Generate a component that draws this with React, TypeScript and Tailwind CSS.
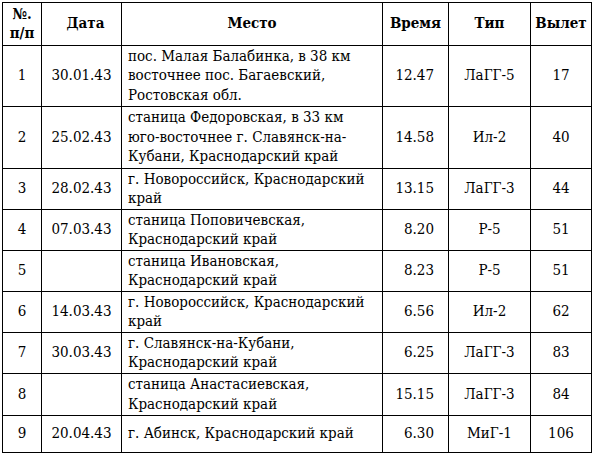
const rows = [
  { n: '1', date: '30.01.43', place: ['пос. Малая Балабинка, в 38 км', 'восточнее пос. Багаевский,', 'Ростовская обл.'], time: '12.47', type: 'ЛаГГ-5', sortie: '17' },
  { n: '2', date: '25.02.43', place: ['станица Федоровская, в 33 км', 'юго-восточнее г. Славянск-на-', 'Кубани, Краснодарский край'], time: '14.58', type: 'Ил-2', sortie: '40' },
  { n: '3', date: '28.02.43', place: ['г. Новороссийск, Краснодарский', 'край'], time: '13.15', type: 'ЛаГГ-3', sortie: '44' },
  { n: '4', date: '07.03.43', place: ['станица Поповичевская,', 'Краснодарский край'], time: '8.20', type: 'Р-5', sortie: '51' },
  { n: '5', date: '', place: ['станица Ивановская,', 'Краснодарский край'], time: '8.23', type: 'Р-5', sortie: '51' },
  { n: '6', date: '14.03.43', place: ['г. Новороссийск, Краснодарский', 'край'], time: '6.56', type: 'Ил-2', sortie: '62' },
  { n: '7', date: '30.03.43', place: ['г. Славянск-на-Кубани,', 'Краснодарский край'], time: '6.25', type: 'ЛаГГ-3', sortie: '83' },
  { n: '8', date: '', place: ['станица Анастасиевская,', 'Краснодарский край'], time: '15.15', type: 'ЛаГГ-3', sortie: '84' },
  { n: '9', date: '20.04.43', place: ['г. Абинск, Краснодарский край'], time: '6.30', type: 'МиГ-1', sortie: '106' },
];

// DejaVu Serif carries Cyrillic; semi-condensed at 15px gets close to Times widths
const cell = "bg-white flex items-center [font-family:'DejaVu_Serif',serif] [font-stretch:semi-condensed] text-[15px] leading-[19.5px]";

export default function App() {
  return (
    <div className="min-h-[455px] w-[594px] bg-white pl-[2px] pt-[2px] text-black">
      <div className="grid w-[590px] grid-cols-[38px_79px_260px_65px_81px_60px] grid-rows-[42px_60px_61px_40px_40px_40px_40px_40px_41px_36px] gap-px border border-black bg-black">
        {/* header */}
        <div className={`${cell} justify-center text-center font-bold`}>
          <span>№.<br />п/п</span>
        </div>
        <div className={`${cell} justify-center pl-2 font-bold`}>Дата</div>
        <div className={`${cell} justify-center font-bold`}>Место</div>
        <div className={`${cell} justify-center font-bold`}>Время</div>
        <div className={`${cell} justify-center font-bold`}>Тип</div>
        <div className={`${cell} justify-center font-bold`}>Вылет</div>

        {rows.map((row) => (
          <div key={row.n} className="contents">
            <div className={`${cell} justify-center`}>{row.n}</div>
            <div className={`${cell} justify-center`}>{row.date}</div>
            <div className={`${cell} px-[6px]`}>
              <span>
                {row.place.map((line, i) => (
                  <span key={i} className="block whitespace-nowrap">{line}</span>
                ))}
              </span>
            </div>
            <div className={`${cell} justify-end pr-[14px]`}>{row.time}</div>
            <div className={`${cell} justify-center`}>{row.type}</div>
            <div className={`${cell} justify-center`}>{row.sortie}</div>
          </div>
        ))}
      </div>
    </div>
  );
}
